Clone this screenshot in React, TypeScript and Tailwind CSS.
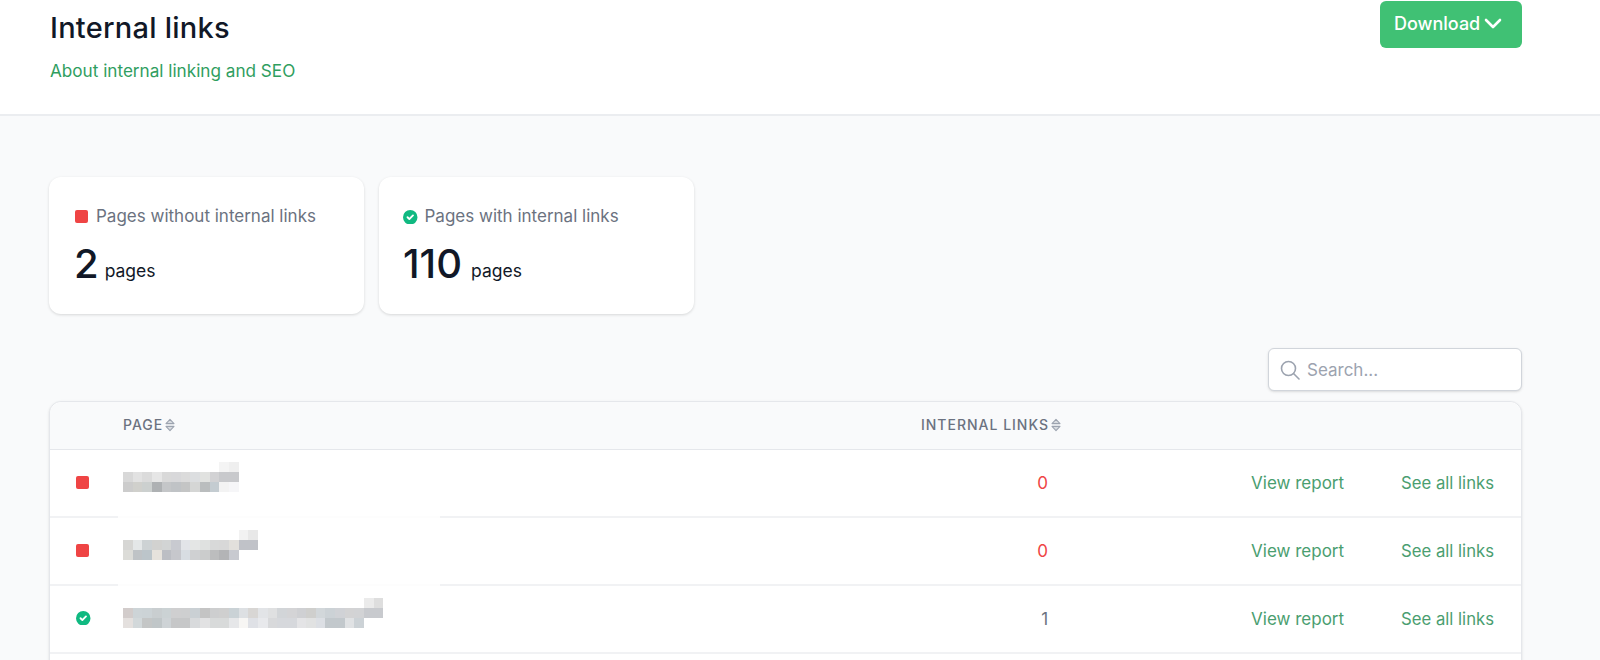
const font = { fontFamily: 'Inter, sans-serif' }

// Blurred-out page names, one array per mosaic row (cells are ~10px squares)
const mosaics: string[][][] = [
  [
    ['#fff', '#fff', '#fff', '#fff', '#fff', '#fff', '#fff', '#fff', '#fff', '#fff', '#f4f4f4', '#efefef'],
    ['#d8d8d8', '#e2e2e2', '#dbdbdb', '#e6e6e6', '#d9d9d9', '#d8d8da', '#dbdbdb', '#dcdee0', '#e1e2e0', '#d2d2d4', '#c8c9cc', '#c8c9cc'],
    ['#cccccc', '#d0d0cc', '#ccd0cf', '#aeb1b3', '#c4c6c8', '#c0c3c6', '#c4c5c5', '#d5d6d5', '#babdbe', '#c4ccd1', '#f3f3f3', '#f6f6f8'],
  ],
  [
    ['#fff', '#fff', '#fff', '#fff', '#fff', '#fff', '#fff', '#fff', '#fff', '#fff', '#fff', '#fff', '#f2f2f2', '#e8e8e8'],
    ['#d6d6d4', '#e4e7e8', '#cdd2d4', '#d2d2d0', '#d2d4d4', '#c8cad0', '#e2e4e8', '#e4e6e5', '#dfe1e0', '#d8d9d9', '#d8d8d8', '#e2e0dc', '#c0c2c8', '#c0c2c8'],
    ['#dcdcd8', '#bfc3c6', '#bcc5ca', '#e6e2dc', '#bcbec4', '#c6c7cc', '#d8dde2', '#cfd0d2', '#cbcccc', '#bcbdbe', '#b3b4b6', '#c8cad0', '#fff', '#fff'],
  ],
  [
    [...Array(25).fill('#fff'), '#ebebeb', '#dedede'],
    ['#d2cccb', '#cdd4d7', '#ccd3d6', '#c9ced0', '#cbd2d4', '#cfcfd0', '#cecfd0', '#cad0d4', '#c4c4c4', '#cdcecf', '#cfcfcf', '#cad2d6', '#dde0e3', '#d8d6d4', '#e2e4e7', '#dfe0e1', '#d2d5d8', '#d4d4d6', '#cfd0d3', '#cfcfcd', '#d2d7da', '#ccd2d6', '#d0d2d6', '#d3d3d4', '#d2d3d5', '#c8cace', '#c8cace'],
    ['#e4e0de', '#d2d8da', '#c4c6c6', '#c0c6c8', '#ced3d6', '#c6c7c8', '#c6c7c8', '#d8dadc', '#e2e2e3', '#d8dada', '#d8dada', '#e6e7e9', '#f7f6f4', '#dfe1e6', '#e8e9ec', '#d8d9db', '#d6d8dc', '#d6d8dc', '#e4e4e6', '#e1e2e2', '#dcdfe4', '#c2c8cc', '#c2c8cc', '#e0e2e4', '#ccd2d6', '#fff', '#fff'],
  ],
]

const SortIcon = () => (
  <svg viewBox="0 0 10 14" className="ml-[2px] h-[14px] w-[10px] text-[#9ca3af]" fill="currentColor" stroke="currentColor" strokeLinejoin="round">
    <path d="M1 5.6 5 1.4 9 5.6Z" fillOpacity={0.35} strokeWidth={1.1} />
    <path d="M1 8.4 5 12.6 9 8.4Z" fillOpacity={0.35} strokeWidth={1.1} />
  </svg>
)

const CheckIcon = ({ className }: { className: string }) => (
  <svg viewBox="2 2 16 16" fill="currentColor" className={`text-[#10b981] ${className}`}>
    <path
      fillRule="evenodd"
      clipRule="evenodd"
      d="M10 18a8 8 0 100-16 8 8 0 000 16zm3.707-9.293a1 1 0 00-1.414-1.414L9 10.586 7.707 9.293a1 1 0 00-1.414 1.414l2 2a1 1 0 001.414 0l4-4z"
    />
  </svg>
)

function Mosaic({ cells }: { cells: string[][] }) {
  return (
    <div className="flex flex-col">
      {cells.map((row, i) => (
        <div key={i} className="flex h-[10px]">
          {row.map((color, j) => (
            <div key={j} className="h-[10px] w-[9.65px]" style={{ backgroundColor: color }} />
          ))}
        </div>
      ))}
    </div>
  )
}

function StatCard({ ok, label, value }: { ok: boolean; label: string; value: string }) {
  return (
    <div className="h-[137px] w-[315px] rounded-xl bg-white pl-[25px] pt-[27px] shadow-[0_1px_3px_rgba(0,0,0,0.14)]">
      <div className="flex h-[26px] items-center">
        {ok ? (
          <CheckIcon className="-ml-px h-[14.5px] w-[14.5px]" />
        ) : (
          <div className="mb-[2px] ml-[1px] h-[13px] w-[13px] rounded-[2px] bg-[#ef4444]" />
        )}
        <span className={`text-[17px] text-[#6b7280] ${ok ? 'ml-[7px]' : 'ml-[8px]'}`}>{label}</span>
      </div>
      <div className="mt-[12px] flex items-baseline">
        <span className={`text-[40px] leading-[44px] font-medium text-[#111827] ${ok ? '-ml-px' : ''}`}>{value}</span>
        <span className={`-translate-y-px text-[17.5px] text-[#111827] ${ok ? 'ml-[9px]' : 'ml-[6px]'}`}>pages</span>
      </div>
    </div>
  )
}

function TableRow({ ok, count, cells, erased }: { ok: boolean; count: number; cells: string[][]; erased: boolean }) {
  return (
    <div className="flex flex-col">
      <div className="flex h-[66px] items-center">
        <div className="flex w-[73px] pb-[2px] pl-[26px]">
          {ok ? (
            <CheckIcon className="h-[14.5px] w-[14.5px]" />
          ) : (
            <div className="h-[13px] w-[13px] rounded-[2px] bg-[#ef4444]" />
          )}
        </div>
        <div className="flex-1 -translate-y-[6px]">
          <Mosaic cells={cells} />
        </div>
        <div className={`w-[40px] pt-[2px] text-right text-[17px] ${ok ? 'text-[#6b7280]' : 'text-[#ef4444]'}`}>{count}</div>
        <a className="ml-[203px] pt-[2px] text-[17px] text-[#4a9e70]">View report</a>
        <a className="ml-[57px] mr-[27px] pt-[2px] text-[16.7px] text-[#4a9e70]">See all links</a>
      </div>
      {/* the redaction in the reference wiped part of some dividers */}
      <div className="flex h-[2px]">
        <div className="w-[68px] bg-[#f1f2f4]" />
        <div className={`w-[322px] ${erased ? 'bg-[#fdfdfd]' : 'bg-[#f1f2f4]'}`} />
        <div className="flex-1 bg-[#f1f2f4]" />
      </div>
    </div>
  )
}

export default function App() {
  return (
    <div className="h-[660px] overflow-hidden bg-[#f9fafb]" style={font}>
      <header className="flex h-[116px] justify-between border-b-2 border-[#ebedf0] bg-white pl-[50px] pr-[78px]">
        <div className="pt-[9px]">
          <h1 className="text-[29px] leading-[38px] font-medium tracking-[0.25px] text-[#111827]">Internal links</h1>
          <a className="mt-[12px] block text-[17.15px] leading-[24px] text-[#2f9e5f]">About internal linking and SEO</a>
        </div>
        <button className="mt-px flex h-[47px] w-[142px] items-start rounded-md bg-[#40c174] pl-[14px] pt-[9px] text-[18px] font-medium text-white">
          Download
          <svg viewBox="0 0 18 11" className="ml-[4px] mt-[8px] h-[11px] w-[18px]" fill="none" stroke="currentColor" strokeWidth={2.6} strokeLinecap="round" strokeLinejoin="round">
            <path d="M2 2 9 9 16 2" />
          </svg>
        </button>
      </header>

      <main className="pl-[49px] pr-[78px] pt-[61px]">
        <div className="flex gap-[15px]">
          <StatCard ok={false} label="Pages without internal links" value="2" />
          <StatCard ok label="Pages with internal links" value="110" />
        </div>

        <div className="mt-[34px] flex justify-end">
          <div className="flex h-[43px] w-[254px] items-center rounded-md border border-[#d1d5db] bg-white pl-[9px] shadow-sm">
            <svg viewBox="0 0 24 24" className="h-[24px] w-[24px] text-[#9ca3af]" fill="none" stroke="currentColor" strokeWidth={1.6} strokeLinecap="round">
              <circle cx="10.5" cy="10.5" r="7" />
              <path d="m21 21-5.5-5.5" />
            </svg>
            <span className="ml-[5px] pt-[2px] text-[17px] text-[#9ca3af]">Search...</span>
          </div>
        </div>

        <div className="mt-[10px] rounded-t-xl border border-[#e5e7eb] bg-white shadow-sm">
          <div className="flex h-[48px] items-center rounded-t-xl border-b border-[#e5e7eb] bg-[#f9fafb] pb-[2px]">
            <div className="flex w-[73px]" />
            <div className="flex flex-1 items-center text-[14px] font-medium uppercase tracking-[1px] text-[#6b7280]">
              Page
              <SortIcon />
            </div>
            <div className="mr-[460px] flex items-center text-[14px] font-medium uppercase tracking-[1px] text-[#6b7280]">
              Internal links
              <SortIcon />
            </div>
          </div>
          {mosaics.map((cells, i) => (
            <TableRow key={i} ok={i === 2} count={i === 2 ? 1 : 0} cells={cells} erased={i < 2} />
          ))}
          <div className="h-[40px]" />
        </div>
      </main>
    </div>
  )
}
